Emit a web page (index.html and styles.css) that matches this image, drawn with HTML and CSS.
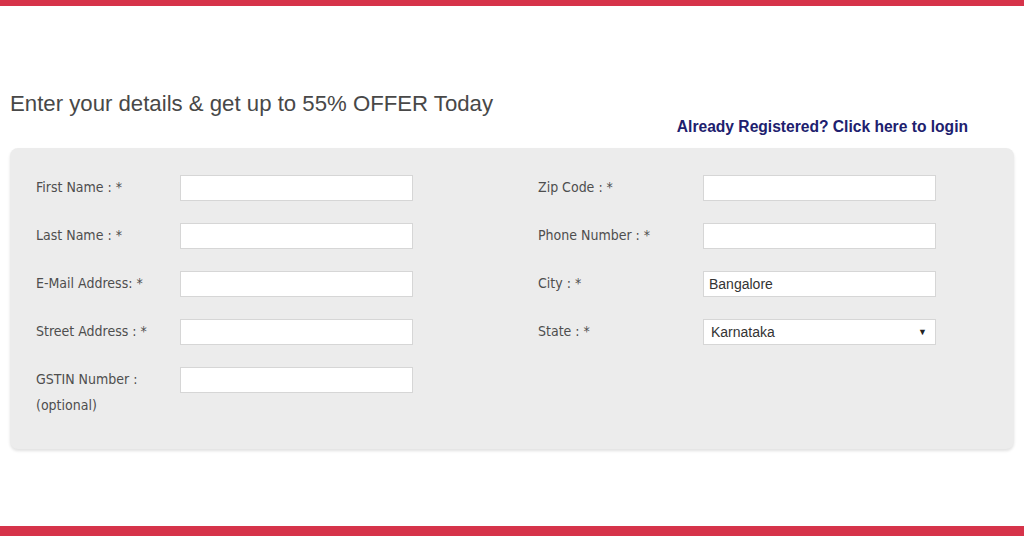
FILE: index.html
```html
<!DOCTYPE html>
<html lang="en">
<head>
<meta charset="utf-8">
<title>Register</title>
<link rel="stylesheet" href="styles.css">
</head>
<body>
<div class="topbar"></div>
<main class="page">
  <h1 class="title">Enter your details &amp; get up to 55% OFFER Today</h1>
  <div class="login-row"><a class="login-link" href="#">Already Registered? Click here to login</a></div>
  <form class="panel">
    <div class="col col-left">
      <div class="field"><label class="label">First Name : *</label><input class="input" type="text"></div>
      <div class="field"><label class="label">Last Name : *</label><input class="input" type="text"></div>
      <div class="field"><label class="label">E-Mail Address: *</label><input class="input" type="text"></div>
      <div class="field"><label class="label">Street Address : *</label><input class="input" type="text"></div>
      <div class="field"><label class="label">GSTIN Number :<br>(optional)</label><input class="input" type="text"></div>
    </div>
    <div class="col col-right">
      <div class="field"><label class="label">Zip Code : *</label><input class="input" type="text"></div>
      <div class="field"><label class="label">Phone Number : *</label><input class="input" type="text"></div>
      <div class="field"><label class="label">City : *</label><input class="input" type="text" value="Bangalore"></div>
      <div class="field"><label class="label">State : *</label>
        <div class="select"><span class="select-text">Karnataka</span><span class="select-arrow">&#9660;</span></div>
      </div>
    </div>
  </form>
</main>
<div class="bottombar"></div>
</body>
</html>
```

FILE: styles.css
```css
html, body {
  margin: 0;
  padding: 0;
  background: #ffffff;
  height: 536px;
  overflow: hidden;
}
body {
  display: flex;
  flex-direction: column;
  font-family: "Liberation Sans", Arial, sans-serif;
}
.topbar {
  height: 6px;
  background: #d6334a;
}
.page {
  flex: 1;
  padding: 86px 10px 0;
}
.title {
  margin: 0;
  font-size: 22.2px;
  line-height: 24px;
  font-weight: normal;
  color: #484848;
}
.login-row {
  display: flex;
  justify-content: flex-end;
  padding-right: 46px;
  margin-top: 3px;
}
.login-link {
  font-size: 15.6px;
  line-height: 16px;
  font-weight: bold;
  color: #20206e;
  text-decoration: none;
}
.panel {
  margin-top: 13px;
  background: #ececec;
  border-radius: 8px;
  box-shadow: 0 2px 3px rgba(0, 0, 0, 0.12);
  padding: 27px 26px 31px;
  display: flex;
}
.col {
  display: flex;
  flex-direction: column;
  gap: 22px;
}
.col-left {
  width: 502px;
}
.field {
  display: flex;
  align-items: flex-start;
}
.col-left .label {
  width: 144px;
}
.col-right .label {
  width: 165px;
}
.label {
  font-family: "DejaVu Sans Condensed", "Liberation Sans", Arial, sans-serif;
  font-stretch: condensed;
  font-size: 14px;
  line-height: 26px;
  margin-top: -1px;
  color: #4e4e4e;
  flex: none;
}
.input {
  box-sizing: border-box;
  width: 233px;
  height: 26px;
  margin: 0;
  border: 1px solid #d6d6d6;
  background: #ffffff;
  padding: 0 5px;
  font-family: "Liberation Sans", Arial, sans-serif;
  font-size: 14px;
  color: #333333;
  outline: none;
}
.select {
  box-sizing: border-box;
  width: 233px;
  height: 26px;
  border: 1px solid #d6d6d6;
  background: #ffffff;
  display: flex;
  align-items: center;
  justify-content: space-between;
  padding: 0 8px 0 7px;
}
.select-text {
  font-size: 14px;
  color: #333333;
}
.select-arrow {
  font-size: 9px;
  color: #222222;
}
.bottombar {
  height: 10px;
  background: #d6334a;
}
```
